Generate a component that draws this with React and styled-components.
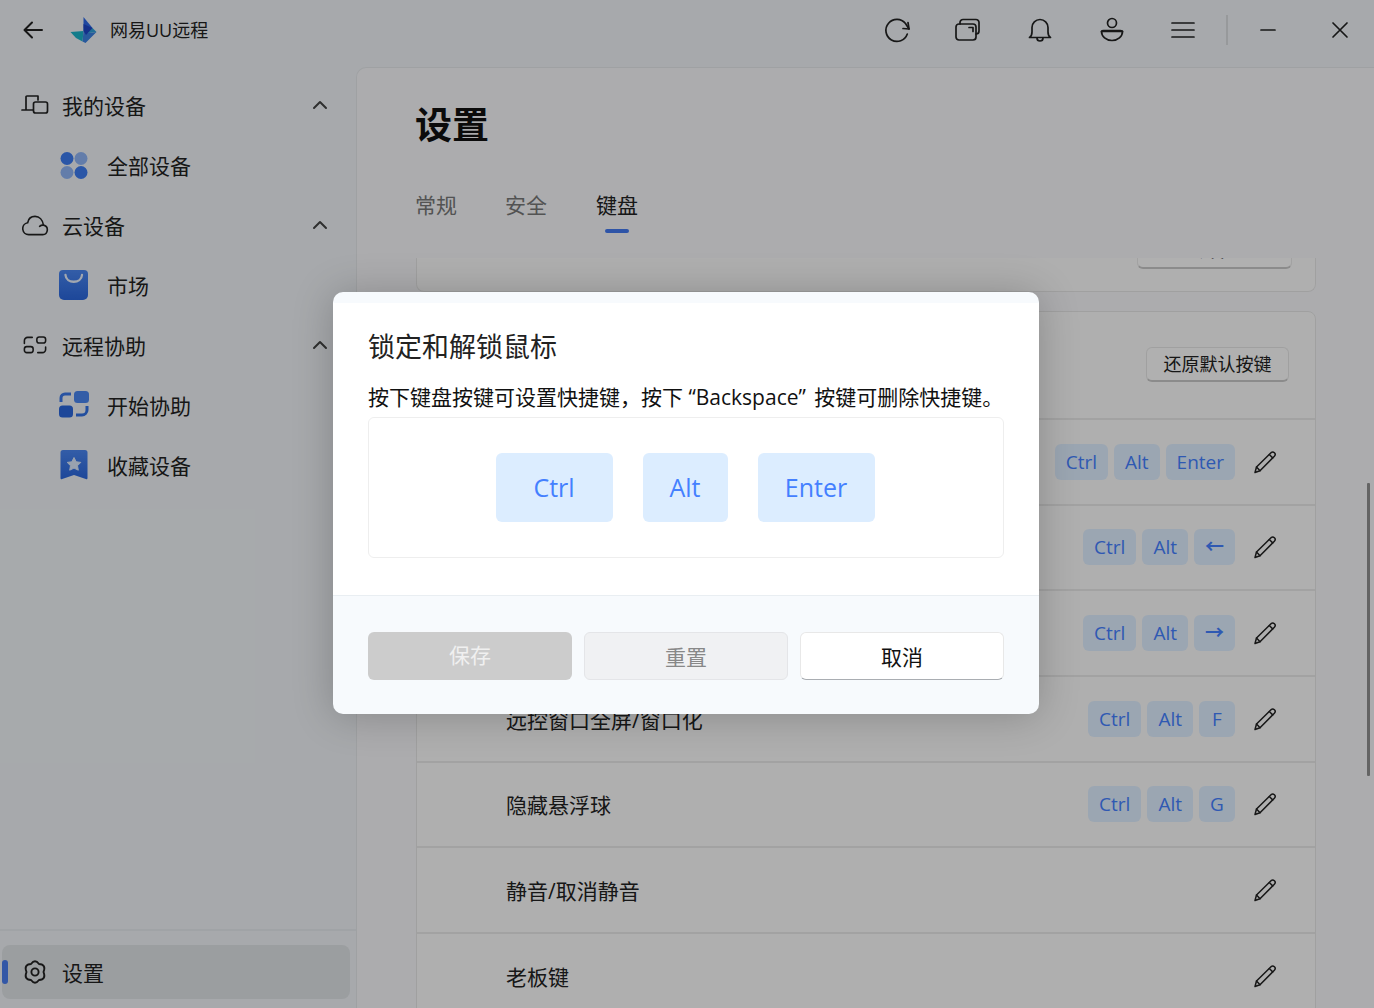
import React from "react";
import styled, { createGlobalStyle } from "styled-components";

const Global = createGlobalStyle`
  html, body { margin: 0; padding: 0; height: 100%; overflow: hidden; }
  body { font-family: "Open Sans", "Noto Sans CJK SC", sans-serif; color: #222; background: #eff3f7; }
  #root { height: 100%; }
  * { box-sizing: border-box; }
`;

const Page = styled.div`
  position: relative; width: 1374px; height: 1008px; display: flex; flex-direction: column; overflow: hidden;
  background: #eff3f7;
`;
const TitleBar = styled.header`
  height: 67px; flex: none; display: flex; align-items: center; padding: 0 0 8px 22px;
`;
const BackBtn = styled.div`display: flex; width: 48px;`;
const AppName = styled.span`font-size: 18px; margin-left: 12px; color: #222; line-height: 26px;`;
const Tools = styled.div`margin-left: auto; margin-right: -2px; display: flex; align-items: center;`;
const Tool = styled.div`
  width: 71.6px; display: flex; justify-content: center; align-items: center;
`;
const Sep = styled.div`width: 2px; height: 30px; background: #d8dcdf; margin: 0 4px 0 7px;`;
const WinBtn = styled.div`width: 72px; display: flex; justify-content: center;`;

const Main = styled.div`flex: 1; display: flex; min-height: 0;`;
const Side = styled.aside`width: 356px; flex: none; display: flex; flex-direction: column;`;
const Nav = styled.nav`flex: 1; padding-top: 8px;`;
const ParentItem = styled.div`
  height: 60px; display: flex; align-items: center; padding: 0 28px 0 21px; font-size: 21px;
  span { margin-left: 13px; flex: 1; color: #222; }
`;
const IconSlot = styled.div`width: 28px; flex: none; display: flex; justify-content: center; align-items: center;`;
const ChildItem = styled.div`
  height: 60px; display: flex; align-items: center; padding-left: 59px; font-size: 21px;
  span { margin-left: 18px; color: #222; }
`;
const SideFoot = styled.div`border-top: 2px solid #e6eaee; height: 79px; padding: 14px 6px 0 2px;`;
const SettingItem = styled.div`
  position: relative; height: 54px; border-radius: 8px; background: #dfe3e6; display: flex; align-items: center; padding-left: 20px; font-size: 21px;
  span { margin-left: 14px; color: #222; }
`;
const Marker = styled.i`position: absolute; left: 0; top: 15px; width: 6px; height: 24px; border-radius: 3px; background: #4a7dee;`;

const Panel = styled.section`
  flex: 1; position: relative; display: flex; flex-direction: column; min-width: 0; background: #f6f7fa;
  border-top: 1px solid #e4e7ea; border-left: 1px solid #e4e7ea; border-top-left-radius: 10px; padding-left: 59px; padding-right: 58px;
`;
const PanelHead = styled.div`height: 190px; flex: none; margin-left: -1px;`;
const H1 = styled.h1`margin: 0; padding-top: 33px; font-size: 37px; line-height: 48px; font-weight: 700; color: #111;`;
const Tabs = styled.div`display: flex; gap: 48px; margin-top: 41px;`;
const Tab = styled.div`
  position: relative; font-size: 21px; line-height: 30px; color: ${p => p.$active ? "#222" : "#777"};
  margin-left: ${p => p.$active ? "1px" : "0"};
  &::after { content: ""; display: ${p => p.$active ? "block" : "none"}; position: absolute; left: 9px; width: 24px; height: 4px; bottom: -13px; background: #4379f0; border-radius: 2px; }
`;
const Scroller = styled.div`flex: 1; overflow: hidden; min-height: 0;`;
const StubCard = styled.div`
  height: 34px; border: 1px solid #e6e6e6; border-top: 0; border-radius: 0 0 8px 8px; background: #fbfbfb; padding-right: 23px; display: flex; justify-content: flex-end; align-items: flex-start; overflow: hidden;
`;
const StubBtn = styled.div`
  width: 155px; height: 36px; margin-top: -25px; border: 1px solid #e8e8e8; border-bottom: 2px solid #c8c8c8; border-radius: 6px; background: #fcfcfc; font-size: 20px; line-height: 31px; text-align: center; color: #222;
`;
const Card = styled.div`margin-top: 19px; border: 1px solid #e6e6e6; border-radius: 8px 8px 0 0; background: #fbfbfb;`;
const CardHead = styled.div`
  height: 106px; display: flex; align-items: center; justify-content: flex-end; padding-right: 26px; padding-bottom: 2px;
`;
const RestoreBtn = styled.div`
  width: 143px; height: 35px; border: 1px solid #e6e6e6; border-bottom: 2px solid #c8c8c8; border-radius: 6px; background: #fcfcfc; font-size: 18px; line-height: 33px; text-align: center; color: #222;
`;
const Row = styled.div`
  height: 85.67px; border-top: 2px solid #e8e8e8; display: flex; align-items: center; padding: 0 38px 0 89px; font-size: 21px; color: #222;
`;
const RowLabel = styled.div`flex: 1; line-height: 30px; padding-top: 2px;`;
const Chips = styled.div`display: flex; gap: 6px; margin-right: 18px;`;
const Chip = styled.div`
  height: 36px; min-width: 36px; padding: 0 11px; border-radius: 6px; background: #dfeeff; color: #4480ff; font-size: 19px; line-height: 36px; text-align: center;
  font-weight: ${p => p.$arrow ? 700 : 400};
`;
const Thumb = styled.div`position: absolute; right: 4px; top: 415px; width: 3px; height: 293px; background: #909090; border-radius: 1px;`;

const Overlay = styled.div`
  position: absolute; inset: 0; background: rgba(0,0,0,.3); display: flex; align-items: center; justify-content: center;
`;
const Modal = styled.div`
  width: 706px; height: 422px; background: #f7fafd; border-radius: 10px; overflow: hidden; box-shadow: 0 2px 40px rgba(0,0,0,.22); display: flex; flex-direction: column; margin-left: -2px; margin-top: -2px;
`;
const Strip = styled.div`height: 11px; flex: none;`;
const Body = styled.div`height: 293px; flex: none; background: #fff; padding: 24px 35px 0; border-bottom: 1px solid #e9eef2;`;
const ModalTitle = styled.div`font-size: 27px; line-height: 40px; color: #222;`;
const Desc = styled.div`font-size: 21px; line-height: 30px; margin-top: 15px; color: #111; white-space: nowrap;`;
const DescTail = styled.span`margin-left: 3px;`;
const KeyBox = styled.div`
  margin-top: 5px; height: 141px; border: 1px solid #eeeeee; border-radius: 6px; display: flex; justify-content: center; align-items: center; gap: 30px; padding-right: 2px;
`;
const Key = styled.div`
  height: 69px; width: ${p => p.$w}px; border-radius: 6px; background: #dcedff; color: #4480ff; font-size: 25px; line-height: 69px; text-align: center;
`;
const Footer = styled.div`flex: 1; padding: 36px 35px 0; display: flex; gap: 12px;`;
const Btn = styled.div`
  width: 204px; flex: none; height: 48px; border-radius: 6px; font-size: 21px; line-height: 48px; text-align: center;
  ${p => p.$kind === "save" && "background:#cccccc;color:#f0f0f0;line-height:46px;"}
  ${p => p.$kind === "reset" && "background:#f0f1f3;color:#888;border:1px solid #e4e5e8;"}
  ${p => p.$kind === "cancel" && "background:#fff;color:#111;border:1px solid #e8e8e8;border-bottom:1px solid #a9adb2;"}
`;

const S = { fill: "none", stroke: "#222", strokeWidth: 1.7, strokeLinecap: "round", strokeLinejoin: "round" };

const Back = () => <svg width="22" height="22" viewBox="0 0 22 22" {...S} strokeWidth="2"><path d="M20 11H3M10 3.500 2.500 11l7.500 7.500" /></svg>;
const Logo = () => (
  <svg width="28" height="28" viewBox="0 0 28 28">
    <polygon points="13.500,1 22.500,12 13.500,12.500" fill="#2b66e6" />
    <polygon points="0.500,16 13.500,15 12.500,25.500 6,22" fill="#1ab2c8" />
    <polygon points="13.500,15 19,17 26.500,16 15.500,27 12.500,25.500" fill="#3a80e0" />
    <polygon points="13.500,12.500 22.500,12 26.500,16 19,17 13.500,15" fill="#2f9fd8" />
    <polygon points="13.500,8 22.500,12 16,19 13.500,15" fill="#1d46c6" />
  </svg>
);
const Refresh = () => <svg width="28" height="28" viewBox="0 0 28 28" {...S}><path d="M24.300 18A11 11 0 1 1 22.500 7.500L26 13" /><path d="M20 12.500 26 13 25 6.500" /></svg>;
const Windows = () => <svg width="28" height="28" viewBox="0 0 28 28" {...S}><rect x="2" y="8" width="20" height="16" rx="3" /><path d="M6 8V6.500a3 3 0 0 1 3-3h13a3 3 0 0 1 3 3V15a3 3 0 0 1-3 3" /><path d="M15 11.500h4v4" /></svg>;
const Bell = () => <svg width="28" height="28" viewBox="0 0 28 28" {...S}><path d="M3.500 21.500c2-1.200 2.500-3 2.500-5.500v-4.500a8 8 0 0 1 16 0V16c0 2.500.5 4.300 2.500 5.500z" /><path d="M11 22a3 3 0 0 0 6 0" /></svg>;
const User = () => <svg width="28" height="28" viewBox="0 0 28 28" {...S}><circle cx="14" cy="7" r="4.500" /><path d="M3.500 15.500h21a10.500 9 0 0 1-21 0z" /><path d="M3.500 15.500a2 1 0 0 1 2-1h17a2 1 0 0 1 2 1" /></svg>;
const Menu = () => <svg width="26" height="22" viewBox="0 0 26 22" {...S}><path d="M2 4h22M2 11h22M2 18h22" /></svg>;
const Min = () => <svg width="18" height="18" viewBox="0 0 18 18" {...S}><path d="M2 9h14" /></svg>;
const Close = () => <svg width="18" height="18" viewBox="0 0 18 18" {...S}><path d="M2 2l14 14M16 2 2 16" /></svg>;
const Chevron = () => <svg width="16" height="10" viewBox="0 0 16 10" fill="none" stroke="#444" strokeWidth="2" strokeLinecap="round" strokeLinejoin="round"><path d="M2 8l6-6 6 6" /></svg>;

const Devices = () => <svg width="28" height="20" viewBox="0 0 28 20" {...S}><path d="M1 15h11M5 15V2a1 1 0 0 1 1-1h11v4" /><rect x="12.500" y="7" width="14" height="11" rx="2" /></svg>;
const Cloud = () => <svg width="27" height="23" viewBox="0 0 28 24" {...S}><path d="M7 21.500h14.500a5 5 0 0 0 .8-9.900C21.500 6 18 2.500 13.500 2.500c-4 0-7 2.700-7.700 6.700A6.200 6.200 0 0 0 7 21.500z" /><path d="M22.300 11.600c-1.500-.2-2.800.2-4 1.200" /></svg>;
const Assist = () => <svg width="24" height="18.500" viewBox="0 0 26 20" {...S}><path d="M10 1.500H5a3.500 3.500 0 0 0-3.500 3.500v3" /><rect x="15" y="1" width="9.500" height="6.500" rx="2.500" /><rect x="1.500" y="11.500" width="9.500" height="6.500" rx="2.500" /><path d="M24.500 12v2.500a3.500 3.500 0 0 1-3.500 3.500h-5" /></svg>;
const Gear = () => <svg width="26" height="26" viewBox="0 0 26 26" {...S} strokeWidth="1.900"><path d="M9 5Q13 -.5 17 5Q24.500 5.500 21.500 13Q24.500 20.500 17 21Q13 26.500 9 21Q1.500 20.500 4.500 13Q1.500 5.500 9 5z" /><circle cx="13" cy="13" r="3.600" /></svg>;

const Grid = () => <svg width="30" height="28" viewBox="0 0 30 28"><circle cx="8" cy="7.500" r="6.500" fill="#3d7cf0" /><circle cx="22" cy="7.500" r="6.500" fill="#8fb4f4" /><circle cx="8" cy="21.500" r="6.500" fill="#8fb4f4" /><circle cx="22" cy="21.500" r="6.500" fill="#3d7cf0" /></svg>;
const Bag = () => <svg width="30" height="30" viewBox="0 0 30 30"><defs><linearGradient id="gb" x1="0" y1="0" x2="0" y2="1"><stop offset="0" stopColor="#4a86f0" /><stop offset="1" stopColor="#2a66dc" /></linearGradient></defs><path d="M4 0h21a4 4 0 0 1 4 4v21a5 5 0 0 1-5 5H5a5 5 0 0 1-5-5V4a4 4 0 0 1 4-4z" fill="url(#gb)" /><path d="M6.500 5c.5 9 16 9 16.500 0" fill="none" stroke="#e8f0fc" strokeWidth="2.300" strokeLinecap="round" /></svg>;
const Start = () => <svg width="30" height="28" viewBox="0 0 30 28"><rect x="15" y="0" width="15" height="12" rx="3.500" fill="#4a86f0" /><rect x="0" y="14.500" width="14" height="12" rx="3.500" fill="#2a66dc" /><path d="M12 3H6a4 4 0 0 0-4 4v4" fill="none" stroke="#3c78e8" strokeWidth="3" /><path d="M28 15v4a5 5 0 0 1-5 5h-6" fill="none" stroke="#3270e2" strokeWidth="3" /></svg>;
const Fav = () => <svg width="30" height="30" viewBox="0 0 30 30"><defs><linearGradient id="gf" x1="0" y1="0" x2="0" y2="1"><stop offset="0" stopColor="#4a86f0" /><stop offset="1" stopColor="#2a66dc" /></linearGradient></defs><path d="M4 0h22a2.500 2.500 0 0 1 2.500 2.500V28a1.200 1.200 0 0 1-1.700 1.100L15 25 3.200 29.100A1.200 1.200 0 0 1 1.500 28V2.500A2.500 2.500 0 0 1 4 0z" fill="url(#gf)" /><path d="M15 7.500l2.200 4.300 4.600.6-3.300 3.300.8 4.500-4.300-2.100-4.300 2.100.8-4.500-3.300-3.300 4.600-.6z" fill="#dbe8fb" stroke="#dbe8fb" strokeLinejoin="round" /></svg>;

const Pencil = () => <svg width="24" height="24" viewBox="0 0 24 24" {...S} strokeWidth="1.500"><path d="M2 22.500l1.500-5.500L18 2.800a2.400 2.400 0 0 1 3.400 3.400L7 20.800z" /><path d="M3.500 17 7 20.800M16.300 4.500l3.400 3.400" /></svg>;

const rows = [
  { label: "", keys: ["Ctrl", "Alt", "Enter"] },
  { label: "", keys: ["Ctrl", "Alt", "←"] },
  { label: "", keys: ["Ctrl", "Alt", "→"] },
  { label: "远控窗口全屏/窗口化", keys: ["Ctrl", "Alt", "F"] },
  { label: "隐藏悬浮球", keys: ["Ctrl", "Alt", "G"] },
  { label: "静音/取消静音", keys: [] },
  { label: "老板键", keys: [] },
];

export default function App() {
  return (
    <Page>
      <Global />
      <TitleBar>
        <BackBtn><Back /></BackBtn>
        <Logo />
        <AppName>网易UU远程</AppName>
        <Tools>
          <Tool><Refresh /></Tool>
          <Tool><Windows /></Tool>
          <Tool><Bell /></Tool>
          <Tool><User /></Tool>
          <Tool><Menu /></Tool>
          <Sep />
          <WinBtn><Min /></WinBtn>
          <WinBtn><Close /></WinBtn>
        </Tools>
      </TitleBar>
      <Main>
        <Side>
          <Nav>
            <ParentItem><IconSlot><Devices /></IconSlot><span>我的设备</span><Chevron /></ParentItem>
            <ChildItem><Grid /><span>全部设备</span></ChildItem>
            <ParentItem><IconSlot><Cloud /></IconSlot><span>云设备</span><Chevron /></ParentItem>
            <ChildItem><Bag /><span>市场</span></ChildItem>
            <ParentItem><IconSlot><Assist /></IconSlot><span>远程协助</span><Chevron /></ParentItem>
            <ChildItem><Start /><span>开始协助</span></ChildItem>
            <ChildItem><Fav /><span>收藏设备</span></ChildItem>
          </Nav>
          <SideFoot>
            <SettingItem><Marker /><Gear /><span>设置</span></SettingItem>
          </SideFoot>
        </Side>
        <Panel>
          <PanelHead>
            <H1>设置</H1>
            <Tabs>
              <Tab>常规</Tab>
              <Tab>安全</Tab>
              <Tab $active>键盘</Tab>
            </Tabs>
          </PanelHead>
          <Scroller>
            <StubCard><StubBtn>去设置</StubBtn></StubCard>
            <Card>
              <CardHead><RestoreBtn>还原默认按键</RestoreBtn></CardHead>
              {rows.map((r, i) => (
                <Row key={i}>
                  <RowLabel>{r.label}</RowLabel>
                  {r.keys.length > 0 && <Chips>{r.keys.map(k => <Chip key={k} $arrow={k === "←" || k === "→"}>{k}</Chip>)}</Chips>}
                  <Pencil />
                </Row>
              ))}
            </Card>
          </Scroller>
          <Thumb />
        </Panel>
      </Main>
      <Overlay>
        <Modal>
          <Strip />
          <Body>
            <ModalTitle>锁定和解锁鼠标</ModalTitle>
            <Desc>按下键盘按键可设置快捷键，按下 “Backspace” <DescTail>按键可删除快捷键。</DescTail></Desc>
            <KeyBox>
              <Key $w={117}>Ctrl</Key>
              <Key $w={85}>Alt</Key>
              <Key $w={117}>Enter</Key>
            </KeyBox>
          </Body>
          <Footer>
            <Btn $kind="save">保存</Btn>
            <Btn $kind="reset">重置</Btn>
            <Btn $kind="cancel">取消</Btn>
          </Footer>
        </Modal>
      </Overlay>
    </Page>
  );
}
